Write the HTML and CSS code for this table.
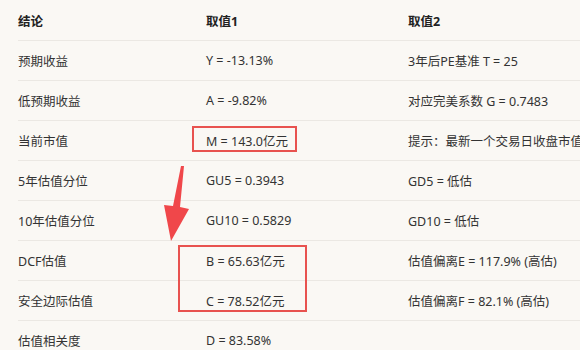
FILE: index.html
```html
<!DOCTYPE html>
<html lang="zh">
<head>
<meta charset="utf-8">
<link rel="stylesheet" href="styles.css">
</head>
<body>
<div class="page">
  <div class="table">
    <div class="row head"><div class="c1">结论</div><div class="c2">取值1</div><div class="c3">取值2</div></div>
    <div class="row"><div class="c1">预期收益</div><div class="c2">Y = -13.13%</div><div class="c3">3年后PE基准 T = 25</div></div>
    <div class="row"><div class="c1">低预期收益</div><div class="c2">A = -9.82%</div><div class="c3">对应完美系数 G = 0.7483</div></div>
    <div class="row"><div class="c1">当前市值</div><div class="c2">M = 143.0亿元</div><div class="c3">提示：最新一个交易日收盘市值</div></div>
    <div class="row"><div class="c1">5年估值分位</div><div class="c2">GU5 = 0.3943</div><div class="c3">GD5 = 低估</div></div>
    <div class="row"><div class="c1">10年估值分位</div><div class="c2">GU10 = 0.5829</div><div class="c3">GD10 = 低估</div></div>
    <div class="row"><div class="c1">DCF估值</div><div class="c2">B = 65.63亿元</div><div class="c3">估值偏离E = 117.9% (高估)</div></div>
    <div class="row"><div class="c1">安全边际估值</div><div class="c2">C = 78.52亿元</div><div class="c3">估值偏离F = 82.1% (高估)</div></div>
    <div class="row"><div class="c1">估值相关度</div><div class="c2">D = 83.58%</div><div class="c3"></div></div>
  </div>
  <svg class="marks" width="580" height="350" viewBox="0 0 580 350">
    <rect x="193" y="127" width="103" height="24" fill="none" stroke="#e8524f" stroke-width="2"/>
    <rect x="179" y="246" width="127" height="65" fill="none" stroke="#e8524f" stroke-width="2"/>
    <polygon points="181,166 184,166 180,207 189,209 171,241 164,205 173,206" fill="#f0474a"/>
  </svg>
</div>
</body>
</html>
```
FILE: styles.css
```css
html, body {
  margin: 0;
  padding: 0;
  background: #faf8f4;
}
.page {
  position: relative;
  width: 580px;
  height: 350px;
  overflow: hidden;
  font-family: "Noto Sans", "Noto Sans CJK SC", sans-serif;
  font-size: 12.5px;
  color: #333;
}
.table {
  margin-left: 18px;
  width: 600px;
}
.row {
  display: grid;
  grid-template-columns: 188px 202px 1fr;
  height: 39px;
  align-items: center;
  border-bottom: 1px solid #ebe8e3;
  white-space: nowrap;
}
.row.head {
  height: 40px;
  font-weight: bold;
  color: #222;
}
.row:last-child {
  border-bottom: none;
}
.marks {
  position: absolute;
  left: 0;
  top: 0;
}
```
